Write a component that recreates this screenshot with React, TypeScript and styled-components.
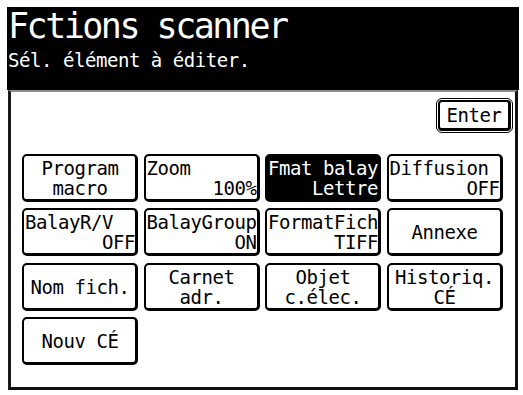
import React from "react";
import styled, { createGlobalStyle } from "styled-components";

const Global = createGlobalStyle`
  html, body { margin: 0; padding: 0; background: #fff; }
  body { font-family: "DejaVu Sans Mono", "Liberation Mono", monospace; }
`;

const Screen = styled.div`
  box-sizing: border-box;
  width: 519px;
  padding: 7px 0 0 7px;
`;

const Header = styled.header`
  box-sizing: border-box;
  height: 83px;
  background: #000;
  color: #fff;
  padding: 1px 0 0 1px;
`;

const Title = styled.h1`
  margin: 0;
  font-family: "DejaVu Sans Mono", monospace;
  font-weight: normal;
  font-size: 35px;
  letter-spacing: -2.5px;
  line-height: 36px;
  white-space: pre;
`;

const Subtitle = styled.div`
  margin-top: 6px;
  font-size: 19px;
  letter-spacing: -0.45px;
  line-height: 20px;
  white-space: pre;
`;

const Panel = styled.section`
  box-sizing: border-box;
  height: 300px;
  margin: 0 1px 0 1px;
  border-top: 2px solid #8c8c8c;
  border-left: 3px solid #1a1a1a;
  border-right: 3px solid #111;
  border-bottom: 3px solid #111;
  background: #fff;
`;

const EnterRow = styled.div`
  display: flex;
  justify-content: flex-end;
  padding: 6px 2px 0 0;
`;

const EnterOuter = styled.button`
  box-sizing: border-box;
  width: 77px;
  height: 35px;
  padding: 1px;
  border: 1px solid #000;
  border-radius: 6px;
  background: #fff;
  display: flex;
  font: inherit;
  cursor: pointer;
`;

const EnterInner = styled.span`
  box-sizing: border-box;
  flex: 1;
  display: flex;
  align-items: center;
  justify-content: center;
  border: 2px solid #000;
  border-right-width: 3px;
  border-bottom-width: 3px;
  border-radius: 4px;
  font-size: 19px;
  letter-spacing: -0.45px;
  color: #000;
`;

const Grid = styled.div`
  display: grid;
  grid-template-columns: repeat(4, 116px);
  grid-auto-rows: 48px;
  column-gap: 5.5px;
  row-gap: 6.33px;
  margin-top: 21px;
  padding-left: 11px;
`;

const Key = styled.button<{ $inverted?: boolean; $split?: boolean }>`
  box-sizing: border-box;
  margin: 0;
  padding: 1px 0 0 1px;
  border: 2px solid #000;
  border-right-width: 3px;
  border-bottom-width: 3px;
  border-radius: 5px;
  background: ${(p) => (p.$inverted ? "#000" : "#fff")};
  color: ${(p) => (p.$inverted ? "#fff" : "#000")};
  font-family: "DejaVu Sans Mono", monospace;
  font-size: 19px;
  letter-spacing: -0.45px;
  line-height: 20px;
  display: flex;
  flex-direction: column;
  justify-content: center;
  align-items: ${(p) => (p.$split ? "stretch" : "center")};
  text-align: center;
  white-space: pre;
  overflow: hidden;
  cursor: pointer;
`;

const Line = styled.span<{ $align?: "left" | "right" | "center" }>`
  display: block;
  text-align: ${(p) => p.$align ?? "center"};
`;

type Item =
  | { kind: "split"; top: string; bottom: string; inverted?: boolean }
  | { kind: "center"; lines: string[] };

const items: Item[] = [
  { kind: "center", lines: ["Program", "macro"] },
  { kind: "split", top: "Zoom", bottom: "100%" },
  { kind: "split", top: "Fmat balay", bottom: "Lettre", inverted: true },
  { kind: "split", top: "Diffusion", bottom: "OFF" },
  { kind: "split", top: "BalayR/V", bottom: "OFF" },
  { kind: "split", top: "BalayGroup", bottom: "ON" },
  { kind: "split", top: "FormatFich", bottom: "TIFF" },
  { kind: "center", lines: ["Annexe"] },
  { kind: "center", lines: ["Nom fich."] },
  { kind: "center", lines: ["Carnet", "adr."] },
  { kind: "center", lines: ["Objet", "c.élec."] },
  { kind: "center", lines: ["Historiq.", "CÉ"] },
  { kind: "center", lines: ["Nouv CÉ"] },
];

export default function App() {
  return (
    <>
      <Global />
      <Screen>
        <Header>
          <Title>Fctions scanner</Title>
          <Subtitle>Sél. élément à éditer.</Subtitle>
        </Header>
        <Panel>
          <EnterRow>
            <EnterOuter>
              <EnterInner>Enter</EnterInner>
            </EnterOuter>
          </EnterRow>
          <Grid>
            {items.map((it, i) =>
              it.kind === "split" ? (
                <Key key={i} $split $inverted={it.inverted}>
                  <Line $align="left">{it.top}</Line>
                  <Line $align="right">{it.bottom}</Line>
                </Key>
              ) : (
                <Key key={i}>
                  {it.lines.map((l) => (
                    <Line key={l}>{l}</Line>
                  ))}
                </Key>
              )
            )}
          </Grid>
        </Panel>
      </Screen>
    </>
  );
}
